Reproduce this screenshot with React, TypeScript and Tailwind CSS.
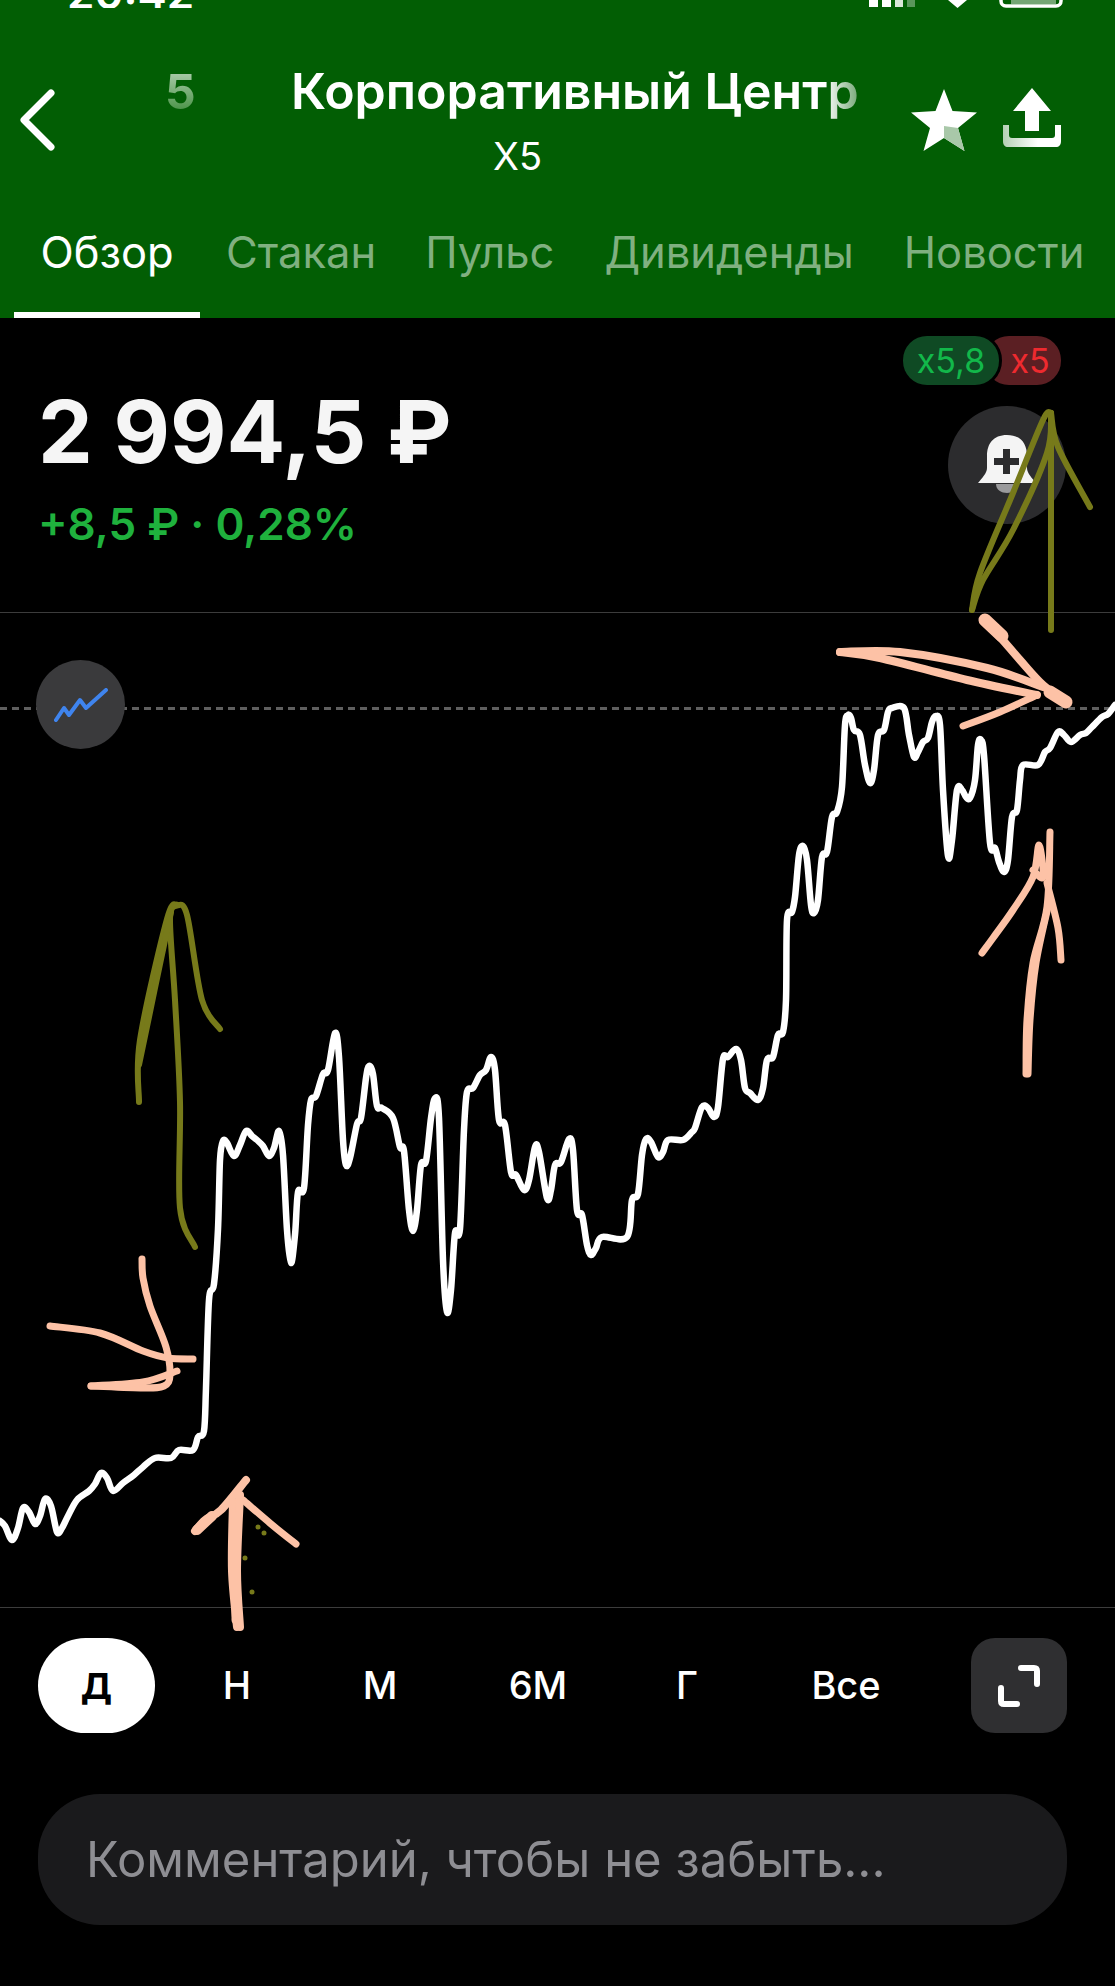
const FONT = '[font-family:Inter,"Noto_Sans",sans-serif]';

type Pt = [number, number];

// smooth line through the points (catmull-rom)
function smooth(pts: Pt[], k = 6) {
  let d = `M${pts[0][0]} ${pts[0][1]}`;
  for (let i = 0; i < pts.length - 1; i++) {
    const p0 = pts[i - 1] ?? pts[i];
    const p1 = pts[i];
    const p2 = pts[i + 1];
    const p3 = pts[i + 2] ?? p2;
    const c1x = p1[0] + (p2[0] - p0[0]) / k;
    const c1y = p1[1] + (p2[1] - p0[1]) / k;
    const c2x = p2[0] - (p3[0] - p1[0]) / k;
    const c2y = p2[1] - (p3[1] - p1[1]) / k;
    d += ` C${c1x.toFixed(1)} ${c1y.toFixed(1)} ${c2x.toFixed(1)} ${c2y.toFixed(1)} ${p2[0]} ${p2[1]}`;
  }
  return d;
}

const chart: Pt[] = [
  [0, 1521], [5, 1526], [12, 1540], [18, 1528], [23, 1508], [29, 1512], [35, 1524], [40, 1516], [45, 1499], [51, 1506], [57, 1532], [62, 1528], [68, 1516],
  [77, 1500], [89, 1491], [95, 1484], [101, 1473], [107, 1478], [113, 1491], [123, 1483], [134, 1475], [143, 1467], [155, 1458], [171, 1458],
  [179, 1450], [193, 1450], [198, 1437], [204, 1431], [206, 1388], [209, 1300], [214, 1284], [218, 1229], [220, 1160], [223, 1141], [227, 1143],
  [234, 1156], [240, 1145], [246, 1131], [252, 1136], [257, 1140], [263, 1146], [269, 1156], [274, 1148], [279, 1131], [283, 1155], [287, 1230], [291, 1263],
  [295, 1235], [298, 1192], [304, 1188], [308, 1125], [311, 1100], [316, 1096], [323, 1074], [328, 1070], [335, 1033], [339, 1057], [343, 1140], [346, 1165], [350, 1158],
  [357, 1124], [361, 1118], [366, 1078], [369, 1066], [373, 1074], [377, 1106], [382, 1108], [393, 1118], [400, 1147], [404, 1151], [409, 1210], [413, 1231],
  [417, 1210], [421, 1165], [426, 1161], [431, 1118], [435, 1098], [439, 1118], [443, 1260], [447, 1312], [451, 1290], [455, 1233], [460, 1229], [464, 1130], [467, 1092],
  [473, 1088], [480, 1075], [486, 1070], [491, 1057], [495, 1070], [499, 1120], [505, 1125], [511, 1172], [516, 1175], [524, 1190], [529, 1180], [535, 1147], [539, 1152],
  [547, 1198], [551, 1190], [555, 1165], [561, 1162], [569, 1139], [573, 1150], [577, 1210], [582, 1215], [587, 1245], [591, 1255], [596, 1248], [602, 1237],
  [627, 1237], [632, 1200], [638, 1194], [642, 1155], [646, 1139], [651, 1142], [658, 1157], [663, 1152], [668, 1140], [683, 1140], [692, 1132], [695, 1128], [702, 1107], [708, 1108],
  [714, 1117], [718, 1107], [723, 1059], [728, 1057], [736, 1049], [741, 1060], [745, 1088], [750, 1093], [758, 1100], [763, 1088], [767, 1060], [773, 1057], [778, 1035], [783, 1032],
  [786, 1000], [787, 920], [792, 912], [795, 897], [799, 855], [803, 846], [807, 860], [811, 905], [814, 913], [818, 900], [822, 857], [827, 852], [832, 817], [837, 812], [842, 787], [845, 725], [848, 715],
  [851, 718], [854, 730], [860, 735], [865, 765], [870, 783], [874, 770], [878, 735], [884, 730], [888, 712], [892, 708], [904, 708], [909, 735], [914, 757], [918, 752], [923, 742], [928, 738],
  [932, 722], [936, 716], [940, 725], [943, 790], [948, 856], [952, 840], [957, 790], [962, 790], [966, 797], [970, 798], [975, 780], [978, 745], [981, 740], [984, 755], [990, 843], [995, 848],
  [999, 862], [1004, 872], [1008, 860], [1012, 817], [1017, 810], [1020, 780], [1023, 765], [1038, 765], [1045, 752], [1050, 748], [1058, 732], [1064, 735], [1071, 742], [1080, 735], [1086, 733],
  [1092, 727], [1102, 717], [1108, 714], [1115, 705],
];

const peachThick: Pt[][] = [
  [[985, 622], [1000, 637], [1020, 660], [1043, 685], [1067, 702]],
  [[840, 652], [900, 652], [987, 668], [1043, 687]],
  [[840, 652], [880, 658], [967, 680], [1037, 695]],
  [[237, 1627], [232, 1571], [233, 1502]],
  [[240, 1627], [237, 1571], [240, 1495]],
  [[195, 1531], [205, 1520], [221, 1510], [246, 1480]],
];

const peachThin: Pt[][] = [
  [[50, 1326], [100, 1333], [143, 1351], [168, 1358], [193, 1359]],
  [[142, 1259], [143, 1278], [150, 1306], [166, 1347], [170, 1375], [164, 1386], [143, 1388], [91, 1386]],
  [[91, 1386], [143, 1382], [177, 1371]],
  [[243, 1500], [271, 1524], [296, 1544]],
  [[963, 726], [1000, 712], [1037, 695]],
  [[1026, 1074], [1027, 1020], [1033, 963], [1047, 907], [1050, 832]],
  [[1028, 1074], [1030, 1020], [1036, 963], [1048, 907]],
  [[982, 953], [993, 938], [1013, 910], [1033, 877], [1039, 845], [1043, 877], [1033, 870]],
  [[1047, 883], [1058, 928], [1061, 960]],
];

const olive: Pt[][] = [
  [[1051, 630], [1051, 413]],
  [[972, 610], [980, 573], [1013, 493], [1043, 420], [1051, 413]],
  [[972, 610], [983, 580], [1013, 530], [1047, 453], [1051, 413]],
  [[1051, 413], [1058, 447], [1090, 507]],
  [[195, 1247], [180, 1208], [180, 1102], [175, 1000], [170, 919], [177, 905]],
  [[139, 1102], [140, 1040], [167, 919], [177, 905]],
  [[139, 1065], [155, 988], [171, 912]],
  [[177, 905], [187, 915], [202, 1000], [220, 1029]],
];

function Marks() {
  return (
    <svg className="absolute inset-0 w-full h-full pointer-events-none" viewBox="0 0 1115 1986" fill="none" strokeLinecap="round" strokeLinejoin="round">
      <path d={smooth(chart)} stroke="#fff" strokeWidth="6.5" />
      {olive.map((p, i) => (
        <path key={i} d={smooth(p)} stroke="#777a1a" strokeWidth="6" />
      ))}
      {peachThick.map((p, i) => (
        <path key={i} d={smooth(p)} stroke="#fdc2a6" strokeWidth="8" />
      ))}
      {peachThin.map((p, i) => (
        <path key={i} d={smooth(p)} stroke="#fdc2a6" strokeWidth="7" />
      ))}
      <path d="M985 620 L1002 636" stroke="#fdc2a6" strokeWidth="13" />
      <path d="M1050 692 L1066 702" stroke="#fdc2a6" strokeWidth="13" />
      <path d="M197 1530 L212 1516" stroke="#fdc2a6" strokeWidth="10" />
      <path d="M236 1620 L236 1520" stroke="#fdc2a6" strokeWidth="9" />
      <circle cx="258" cy="1527" r="2.5" fill="#777a1a" />
      <circle cx="264" cy="1533" r="2.5" fill="#777a1a" />
      <circle cx="245" cy="1558" r="2.5" fill="#777a1a" />
      <circle cx="252" cy="1592" r="2.5" fill="#777a1a" />
    </svg>
  );
}

function StatusBar() {
  return (
    <div className="h-[8px] overflow-hidden flex items-end justify-between pl-[67px] pr-[49px]">
      <span className="text-[44px] leading-none font-semibold text-white -mb-[7px]">20:42</span>
      <svg width="197" height="8" viewBox="0 0 197 8">
        <g fill="#fff">
          <rect x="0" y="0" width="9" height="7" />
          <rect x="13" y="0" width="9" height="7" />
          <rect x="26" y="0" width="8" height="7" opacity=".85" />
          <rect x="38" y="0" width="8" height="7" opacity=".35" />
          <path d="M79 0h19l-9.500 8z" />
        </g>
        <path d="M132 0v1c0 3 2 5 5 5h50c3 0 5-2 5-5V0" stroke="#fff" strokeWidth="3.500" fill="none" />
        <rect x="142" y="0" width="45" height="4" fill="#fff" opacity=".45" />
      </svg>
    </div>
  );
}

function Header() {
  const tabs = [
    { name: 'Обзор', cls: 'w-[186px] ml-[14px] text-white border-white' },
    { name: 'Стакан', cls: 'ml-[26px] text-[#80b080] border-transparent' },
    { name: 'Пульс', cls: 'ml-[49px] text-[#80b080] border-transparent' },
    { name: 'Дивиденды', cls: 'ml-[50px] text-[#80b080] border-transparent' },
    { name: 'Новости', cls: 'ml-[50px] text-[#80b080] border-transparent' },
  ];
  return (
    <div className="h-[318px] bg-[#025e04] flex flex-col">
      <StatusBar />
      <div className="flex items-start h-[198px]">
        <svg className="ml-[19px] mt-[81px] shrink-0" width="36" height="62" viewBox="0 0 36 62" fill="none">
          <path d="M32 4 L5 31 L32 58" stroke="#fff" strokeWidth="7" strokeLinecap="round" strokeLinejoin="round" />
        </svg>
        <span className="ml-[110px] mt-[55px] w-[126px] text-[48px] leading-[58px] font-bold text-transparent bg-clip-text bg-gradient-to-b from-[#c0d8c0] to-[#2a842a]">5</span>
        <div className="flex flex-col items-start w-[601px]">
          <span className="mt-[54px] text-[50px] leading-[58px] font-semibold text-white whitespace-nowrap [mask-image:linear-gradient(to_right,#000_94%,rgba(0,0,0,.45)_100%)]">Корпоративный Центр</span>
          <span className="ml-[202px] mt-[14px] text-[38px] leading-[44px] text-white">X5</span>
        </div>
        <svg className="ml-[18px] mt-[80px] shrink-0" width="68" height="64" viewBox="0 0 68 64">
          <path d="M34 1 L42.500 23 L67 24.500 L48 40 L54.500 63 L34 50 L13.500 63 L20 40 L1 24.500 L25.500 23 Z" fill="#fff" />
          <path d="M34 38 L48 40 L54.500 63 L34 50 Z" fill="#a9c8a9" />
        </svg>
        <svg className="ml-[23px] mt-[79px] shrink-0" width="62" height="62" viewBox="0 0 62 62">
          <defs>
            <linearGradient id="tray" x1="0" x2="1" y1="0" y2="0">
              <stop offset="0" stopColor="#b5d0b5" />
              <stop offset=".6" stopColor="#fff" />
            </linearGradient>
          </defs>
          <path d="M31 1 L50 24 H38 V44 H24 V24 H12 Z" fill="#fff" />
          <path d="M2 38 H8 V48 C8 50 9 51 11 51 H51 C53 51 54 50 54 48 V38 H60 V54 C60 58 58 60 55 60 H7 C4 60 2 58 2 54 Z" fill="url(#tray)" />
        </svg>
      </div>
      <div className="flex items-stretch h-[112px]">
        {tabs.map((t) => (
          <div key={t.name} className={`${t.cls} border-b-[6px] flex justify-center pt-[19px] text-[43.5px] leading-[54px] whitespace-nowrap`}>
            {t.name}
          </div>
        ))}
      </div>
    </div>
  );
}

function PriceBlock() {
  return (
    <div className="h-[295px] border-b border-[#3c3c3c] relative px-[38px]">
      <div className="pt-[64px] text-[87px] leading-[100px] font-bold text-[#f5f5f5] whitespace-nowrap">2 994,5 ₽</div>
      <div className="mt-[16px] text-[44px] leading-[52px] font-semibold text-[#1fb13d] whitespace-nowrap">+8,5 ₽ · 0,28%</div>
      <div className="absolute right-[54px] top-[18px] flex items-center">
        <span className="relative z-10 h-[49px] w-[96px] rounded-[24px] bg-[#0f4a24] ring-[3px] ring-black text-[#12b84a] text-[34px] leading-[49px] text-center">x5,8</span>
        <span className="h-[49px] w-[76px] -ml-[14px] pl-[14px] rounded-[24px] bg-[#5b1f23] text-[#ee2a2f] text-[34px] leading-[49px] text-center">x5</span>
      </div>
      <div className="absolute right-[49px] top-[88px] w-[118px] h-[118px] rounded-full bg-[#2c2c2e] flex items-center justify-center">
        <svg width="60" height="62" viewBox="0 0 60 62">
          <path d="M19 50 H41 C41 62 19 62 19 50 Z" fill="#9a9a9c" />
          <path d="M30 1 C44 1 50 10 50 22 V34 C50 39 55 44 59 49 H1 C5 44 10 39 10 34 V22 C10 10 16 1 30 1 Z" fill="#f4f4f4" />
          <path d="M26 15 H33 V24 H42 V31 H33 V40 H26 V31 H17 V24 H26 Z" fill="#2c2c2e" />
        </svg>
      </div>
    </div>
  );
}

function ChartArea() {
  return (
    <div className="h-[995px] pt-[94px] border-b border-[#3c3c3c] relative">
      <div className="h-[3px] bg-[repeating-linear-gradient(to_right,#5f5f5f_0,#5f5f5f_7px,transparent_7px,transparent_12px)]" />
      <div className="absolute left-[36px] top-[47px] w-[89px] h-[89px] rounded-full bg-[#3a3a3c] flex items-center justify-center">
        <svg width="54" height="34" viewBox="0 0 54 34" fill="none">
          <path d="M2 32 L10 20 L15 27 L26 12 L32 20 L52 2" stroke="#3f84ee" strokeWidth="4" strokeLinejoin="round" strokeLinecap="round" />
        </svg>
      </div>
    </div>
  );
}

function Periods() {
  const items = [
    { label: 'Н', w: 'w-[124px]' },
    { label: 'М', w: 'w-[162px]' },
    { label: '6М', w: 'w-[154px]' },
    { label: 'Г', w: 'w-[144px]' },
    { label: 'Все', w: 'w-[174px]' },
  ];
  return (
    <div className="flex items-center h-[95px] mt-[30px] pl-[38px] pr-[48px]">
      <div className="w-[117px] h-[95px] rounded-full bg-white flex items-center justify-center text-[36px] font-bold text-black">Д</div>
      <div className="flex ml-[20px]">
        {items.map((it) => (
          <div key={it.label} className={`${it.w} text-center text-[38px] font-medium text-white`}>
            {it.label}
          </div>
        ))}
      </div>
      <div className="ml-auto w-[96px] h-[95px] rounded-[24px] bg-[#2f2f31] flex items-center justify-center">
        <svg width="44" height="44" viewBox="0 0 44 44" fill="none">
          <path d="M24 4 H37 C39 4 40 5 40 7 V20" stroke="#fff" strokeWidth="6" strokeLinecap="round" />
          <path d="M4 24 V37 C4 39 5 40 7 40 H20" stroke="#fff" strokeWidth="6" strokeLinecap="round" />
        </svg>
      </div>
    </div>
  );
}

export default function App() {
  return (
    <div className={`${FONT} w-[1115px] h-[1986px] bg-black relative overflow-hidden`}>
      <Header />
      <PriceBlock />
      <ChartArea />
      <Periods />
      <div className="ml-[38px] mr-[48px] mt-[61px] h-[131px] rounded-[62px] bg-[#1a1a1c] flex items-center pl-[48px] text-[49px] text-[#8e8e93] whitespace-nowrap">
        Комментарий, чтобы не забыть...
      </div>
      <Marks />
    </div>
  );
}
